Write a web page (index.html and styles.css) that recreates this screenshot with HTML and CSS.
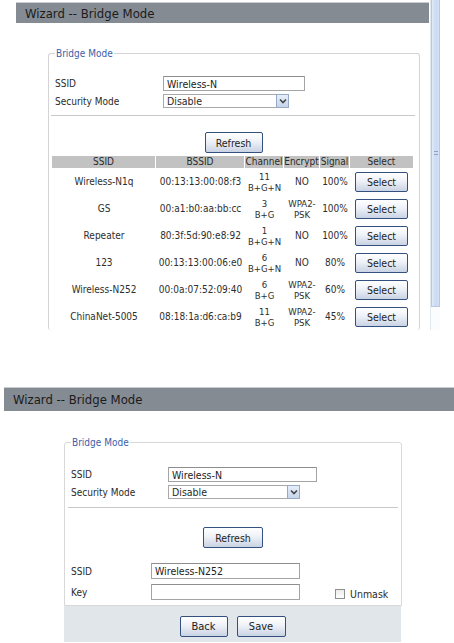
FILE: index.html
```html
<!DOCTYPE html>
<html>
<head>
<meta charset="utf-8">
<link rel="stylesheet" href="styles.css">
</head>
<body>
<div class="shot1">
  <div class="main1">
    <div class="titlebar tb1">Wizard -- Bridge Mode</div>
    <fieldset class="fs fs1">
      <legend>Bridge Mode</legend>
      <div class="frow r-first"><span class="lbl l1">SSID</span><span class="inp i1">Wireless-N</span></div>
      <div class="frow r-second"><span class="lbl l1">Security Mode</span><span class="sel s1"><span class="seltext">Disable</span><span class="arrow"><svg width="8" height="6" viewBox="0 0 8 6"><path d="M1 1.5 L4 4.5 L7 1.5" fill="none" stroke="#444" stroke-width="1.6"/></svg></span></span></div>
      <div class="hr hr1"></div>
      <div class="center"><span class="btn refresh1">Refresh</span></div>
      <table class="scan">
        <thead>
          <tr><th class="c-ssid">SSID</th><th class="c-bssid">BSSID</th><th class="c-ch">Channel</th><th class="c-enc">Encrypt</th><th class="c-sig">Signal</th><th class="c-selh">Select</th></tr>
        </thead>
        <tbody>
          <tr><td>Wireless-N1q</td><td>00:13:13:00:08:f3</td><td class="sm">11<br>B+G+N</td><td>NO</td><td>100%</td><td><span class="btn sbtn">Select</span></td></tr>
          <tr><td>GS</td><td>00:a1:b0:aa:bb:cc</td><td class="sm">3<br>B+G</td><td class="sm">WPA2-<br>PSK</td><td>100%</td><td><span class="btn sbtn">Select</span></td></tr>
          <tr><td>Repeater</td><td>80:3f:5d:90:e8:92</td><td class="sm">1<br>B+G+N</td><td>NO</td><td>100%</td><td><span class="btn sbtn">Select</span></td></tr>
          <tr><td>123</td><td>00:13:13:00:06:e0</td><td class="sm">6<br>B+G+N</td><td>NO</td><td>80%</td><td><span class="btn sbtn">Select</span></td></tr>
          <tr><td>Wireless-N252</td><td>00:0a:07:52:09:40</td><td class="sm">6<br>B+G</td><td class="sm">WPA2-<br>PSK</td><td>60%</td><td><span class="btn sbtn">Select</span></td></tr>
          <tr><td>ChinaNet-5005</td><td>08:18:1a:d6:ca:b9</td><td class="sm">11<br>B+G</td><td class="sm">WPA2-<br>PSK</td><td>45%</td><td><span class="btn sbtn">Select</span></td></tr>
        </tbody>
      </table>
    </fieldset>
  </div>
  <div class="scrollbar"><div class="thumb"><span class="grip"></span></div></div>
</div>

<div class="shot2">
  <div class="titlebar tb2">Wizard -- Bridge Mode</div>
  <div class="panel2">
    <fieldset class="fs fs2">
      <legend>Bridge Mode</legend>
      <div class="frow r-first2"><span class="lbl l2">SSID</span><span class="inp i2">Wireless-N</span></div>
      <div class="frow r-second"><span class="lbl l2">Security Mode</span><span class="sel s2"><span class="seltext">Disable</span><span class="arrow"><svg width="8" height="6" viewBox="0 0 8 6"><path d="M1 1.5 L4 4.5 L7 1.5" fill="none" stroke="#444" stroke-width="1.6"/></svg></span></span></div>
      <div class="hr hr2"></div>
      <div class="center"><span class="btn refresh2">Refresh</span></div>
      <div class="frow r-ssid2"><span class="lbl l3">SSID</span><span class="inp i3">Wireless-N252</span></div>
      <div class="frow r-key"><span class="lbl l3">Key</span><span class="inp i3"></span><span class="unmask"><span class="cb"></span>Unmask</span></div>
    </fieldset>
    <div class="footer">
      <span class="btn fbtn back">Back</span>
      <span class="btn fbtn save">Save</span>
    </div>
  </div>
</div>
</body>
</html>
```

FILE: styles.css
```css
html, body {
  margin: 0;
  padding: 0;
  background: #ffffff;
}
body {
  width: 454px;
  height: 643px;
  overflow: hidden;
  font-family: "DejaVu Sans Condensed", "DejaVu Sans", sans-serif;
  font-size: 10px;
  color: #2a2a2a;
}

/* ---------- shot 1 ---------- */
.shot1 {
  display: flex;
  height: 330px;
  overflow: hidden;
}
.main1 {
  width: 430px;
  padding-top: 2px;
}
.titlebar {
  box-sizing: border-box;
  background: #858b93;
  border-top: 1px solid #c9ccd0;
  color: #1b1b1b;
  font-size: 13px;
  display: flex;
  align-items: center;
}
.tb1 {
  margin-left: 16px;
  width: 413px;
  height: 21px;
  padding-left: 9px;
}

.fs {
  box-sizing: border-box;
  margin: 0;
  border: 1px solid #d4d4d4;
  border-radius: 3px;
  padding: 0;
}
.fs legend {
  color: #3b5ea8;
  font-size: 10px;
  padding: 0 1px;
  margin-left: 3px;
  line-height: 11px;
}
.fs1 {
  margin-top: 25px;
  margin-left: 48px;
  width: 371px;
  padding: 0 4px 0 3px;
  border-bottom: none;
}

.frow {
  display: flex;
  align-items: center;
}
.lbl {
  flex: none;
}
.l1 { width: 108px; padding-left: 3px; }
.r-first { margin-top: 17px; height: 15px; }
.r-second { margin-top: 3px; height: 14px; }

.inp {
  box-sizing: border-box;
  display: flex;
  align-items: center;
  height: 15px;
  border: 1px solid #a4a4a4;
  border-top-color: #8e8e8e;
  padding-left: 3px;
  background: #fff;
  color: #222;
  font-size: 10.5px;
}
.i1 { width: 142px; }

.sel {
  box-sizing: border-box;
  display: flex;
  align-items: center;
  height: 14px;
  border: 1px solid #a9a9a9;
  background: #fff;
  font-size: 10.5px;
}
.seltext { flex: 1; padding-left: 3px; }
.s1 { width: 126px; }
.arrow {
  box-sizing: border-box;
  width: 13px;
  height: 14px;
  margin: -1px -1px -1px 0;
  border: 1px solid #98a9c4;
  background: linear-gradient(#e6eefa, #c6d5ec);
  display: flex;
  align-items: center;
  justify-content: center;
}

.hr {
  height: 1px;
  background: #c8c8c8;
}
.hr1 { margin: 7px 0 0 0; width: 364px; margin-left: -1px; }

.center {
  display: flex;
  justify-content: center;
}
.btn {
  box-sizing: border-box;
  display: inline-flex;
  align-items: center;
  justify-content: center;
  border: 1px solid #34507f;
  border-radius: 2px;
  background: linear-gradient(#ffffff 0%, #eef1f7 45%, #c9d3e4 100%);
  color: #1d1d1d;
  font-size: 10.5px;
}
.refresh1 {
  margin-top: 16px;
  width: 58px;
  height: 21px;
}

.scan {
  margin-top: 3px;
  border-collapse: separate;
  border-spacing: 0;
  width: 361px;
  table-layout: fixed;
  font-size: 10px;
  color: #2e2e2e;
}
.scan th {
  background: #c2c2c2;
  font-weight: normal;
  height: 12px;
  padding: 0;
  line-height: 12px;
  border-right: 1px solid #fff;
  color: #2a2a2a;
}
.scan th:last-child { border-right: none; }
.c-ssid { width: 103px; }
.c-bssid { width: 88px; }
.c-ch { width: 38px; }
.c-enc { width: 35px; }
.c-sig { width: 29px; }
.c-selh { width: 63px; }
.scan td {
  height: 27px;
  padding: 0;
  text-align: center;
  vertical-align: middle;
  white-space: nowrap;
}
.scan td.sm {
  font-size: 9.5px;
  line-height: 11px;
}
.sbtn {
  width: 53px;
  height: 20px;
}

.scrollbar {
  box-sizing: border-box;
  width: 10px;
  height: 330px;
  border-left: 1px solid #e2e8f0;
  background: #fbfcfe;
}
.thumb {
  box-sizing: border-box;
  height: 307px;
  border: 1px solid #b7c8e2;
  border-top: none;
  background: linear-gradient(90deg, #dfe9f8, #c9daf3 60%, #d5e2f6);
  display: flex;
  align-items: center;
  justify-content: center;
}
.grip {
  width: 4px;
  height: 4px;
  border-top: 1px solid #8aa2c4;
  border-bottom: 1px solid #8aa2c4;
  box-sizing: border-box;
}

/* ---------- shot 2 ---------- */
.shot2 {
  margin-top: 57px;
}
.tb2 {
  margin-left: 4px;
  width: 450px;
  height: 24px;
  padding-left: 9px;
}
.panel2 {
  margin-left: 64px;
  width: 337px;
  margin-top: 26px;
}
.fs2 {
  width: 337px;
  padding: 0 3px 5px 3px;
  border-color: #d8d8d8;
  border-radius: 3px 3px 0 0;
}
.l2 { width: 97px; padding-left: 3px; }
.i2 { width: 149px; }
.s2 { width: 132px; }
.r-first2 { margin-top: 19px; height: 15px; }
.hr2 { margin-top: 8px; width: 330px; }
.refresh2 {
  margin-top: 19px;
  width: 60px;
  height: 21px;
}
.l3 { width: 80px; padding-left: 3px; }
.i3 { width: 149px; height: 16px; }
.r-ssid2 { margin-top: 15px; height: 16px; }
.r-key { margin-top: 5px; height: 16px; }
.unmask {
  display: flex;
  align-items: center;
  margin-left: 35px;
  font-size: 10.5px;
  margin-top: 4px;
}
.cb {
  box-sizing: border-box;
  width: 10px;
  height: 10px;
  border: 1px solid #8e8e8e;
  background: linear-gradient(#ececec, #fdfdfd);
  margin-right: 5px;
}
.footer {
  height: 36px;
  background: #e1e6ea;
  display: flex;
  justify-content: center;
  align-items: flex-start;
  gap: 9px;
  padding-top: 10px;
  box-sizing: border-box;
}
.fbtn {
  height: 21px;
  font-size: 11px;
}
.back { width: 48px; }
.save { width: 49px; }
```
